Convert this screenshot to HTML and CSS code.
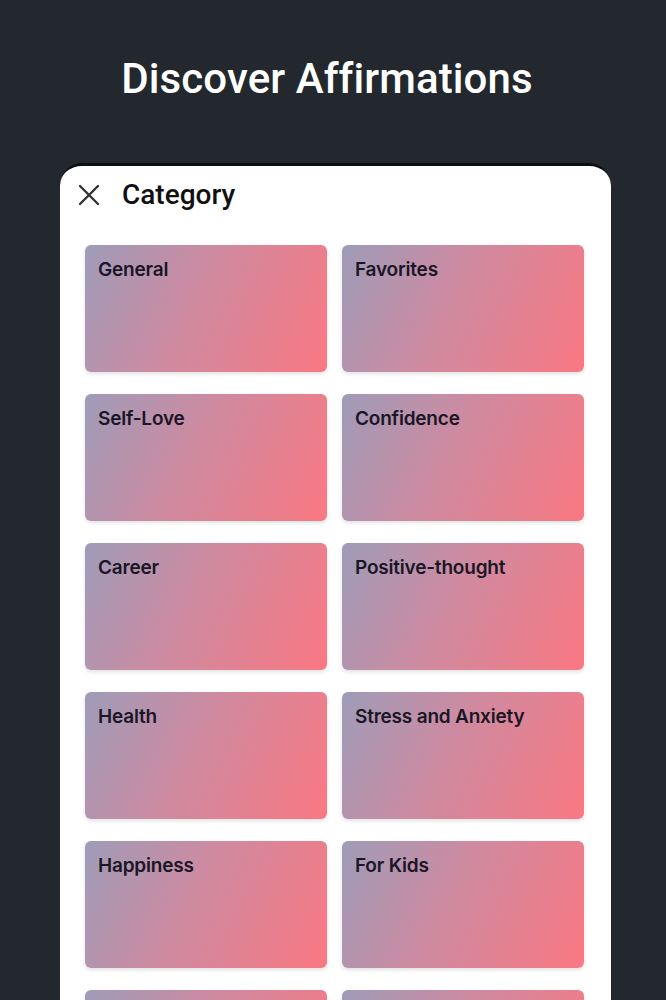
FILE: index.html
```html
<!DOCTYPE html>
<html lang="en">
<head>
  <meta charset="UTF-8">
  <meta name="viewport" content="width=device-width, initial-scale=1.0">
  <title>Discover Affirmations</title>
  <link rel="stylesheet" href="styles.css">
</head>
<body>
  <h1 class="title">Discover Affirmations</h1>

  <div class="phone">
    <div class="header">
      <svg class="close" width="22" height="22" viewBox="0 0 22 22">
        <path d="M2 2 L20 20 M20 2 L2 20" stroke="#333" stroke-width="2.4" stroke-linecap="round" fill="none"/>
      </svg>
      <span class="header-title">Category</span>
    </div>

    <div class="grid">
      <div class="card"><span>General</span></div>
      <div class="card"><span>Favorites</span></div>
      <div class="card"><span>Self-Love</span></div>
      <div class="card"><span>Confidence</span></div>
      <div class="card"><span>Career</span></div>
      <div class="card"><span>Positive-thought</span></div>
      <div class="card"><span>Health</span></div>
      <div class="card"><span>Stress and Anxiety</span></div>
      <div class="card"><span>Happiness</span></div>
      <div class="card"><span>For Kids</span></div>
      <div class="card"><span></span></div>
      <div class="card"><span></span></div>
    </div>
  </div>
</body>
</html>
```

FILE: styles.css
```css
body {
  margin: 0;
  padding: 0;
  background-color: #22282d;
  font-family: Roboto, "Liberation Sans", sans-serif;
  height: 1000px;
  overflow: hidden;
}
.title {
  margin: 0;
  padding: 54px 12px 0 0;
  height: 163px;
  box-sizing: border-box;
  text-align: center;
  color: #ffffff;
  font-size: 42px;
  font-weight: 500;
  letter-spacing: 0.1px;
}
.phone {
  margin-left: 60px;
  width: 551px;
  background: #ffffff;
  border-top: 3px solid #0c0e10;
  border-radius: 22px 22px 0 0;
  height: 834px;
  overflow: hidden;
}
.header {
  display: flex;
  align-items: center;
  height: 56px;
  padding-left: 18px;
}
.close {
  margin-right: 22px;
  margin-top: 2px;
}
.header-title {
  font-size: 28px;
  font-weight: 500;
  color: #111111;
}
.grid {
  display: grid;
  grid-template-columns: 242px 242px;
  column-gap: 15px;
  row-gap: 22px;
  padding: 23px 0 0 25px;
}
.card {
  height: 127px;
  border-radius: 6px;
  background: linear-gradient(115deg, #9e9cb9 0%, #cf8aa0 45%, #fa7882 100%);
  box-shadow: 0 2px 4px rgba(0, 0, 0, 0.12);
  padding: 13px 13px;
  box-sizing: border-box;
}
.card span {
  font-family: Inter, "Liberation Sans", sans-serif;
  font-size: 19px;
  font-weight: 600;
  color: #1a1626;
  letter-spacing: -0.2px;
}
```
